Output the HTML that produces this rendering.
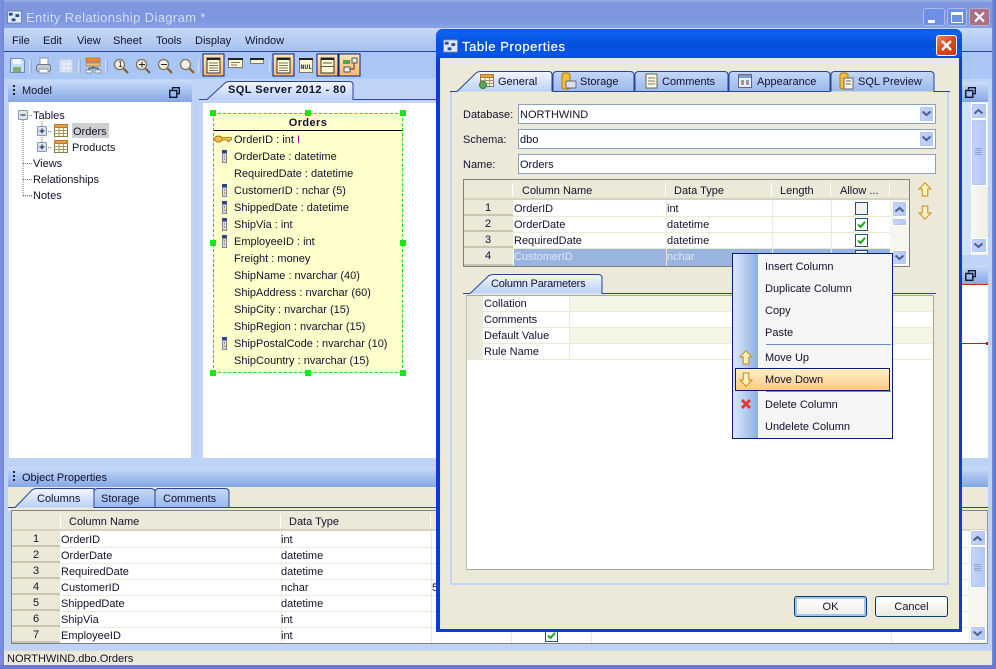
<!DOCTYPE html>
<html><head><meta charset="utf-8">
<style>
html,body{margin:0;padding:0;width:996px;height:669px;overflow:hidden;background:#fff}
#w{position:absolute;left:0;top:0;width:996px;height:669px;overflow:hidden;background:#bfd3f7;font:11px/14px "Liberation Sans",sans-serif;color:#12122e;letter-spacing:0}
.a,.t,svg.i{position:absolute}
.t{white-space:nowrap;margin-top:1px}
.b{position:absolute;box-sizing:border-box}
.hd{background:linear-gradient(#c9dbf9,#84a7e4)}
.rh{position:absolute;background:#ece9d8;box-shadow:inset 0 -2px 0 #c9c5b2}
.ln{position:absolute;background:#ece9d8}
.sb{position:absolute;box-sizing:border-box;background:linear-gradient(90deg,#c5d5fb,#b3c6f6);border:1px solid #fff;outline:1px solid #b4c8f0;outline-offset:-2px;border-radius:2px}
</style></head><body>
<div id="w">
<svg width="0" height="0" style="position:absolute"><defs>
<linearGradient id="ga" x1="0" y1="0" x2="0" y2="1"><stop offset="0" stop-color="#f3f7fe"/><stop offset="1" stop-color="#b9d0f6"/></linearGradient>
<linearGradient id="gi" x1="0" y1="0" x2="0" y2="1"><stop offset="0" stop-color="#c6d8f8"/><stop offset="1" stop-color="#9ab9ec"/></linearGradient>
<linearGradient id="go" x1="0" y1="0" x2="0" y2="1"><stop offset="0" stop-color="#ffe9b8"/><stop offset="1" stop-color="#fbb668"/></linearGradient>
<symbol id="tbl" viewBox="0 0 14 13"><rect x=".5" y=".5" width="13" height="12" fill="#fffbe8" stroke="#8a7a50"/><rect x=".5" y=".5" width="13" height="3" fill="#e8a040" stroke="#b07a30"/><path d="M5 3v9M9.500 3v9M1 6.500h12M1 9.500h12" stroke="#a09870"/></symbol>
<symbol id="idx" viewBox="0 0 7 13"><path d="M1 0h5v3H1z" fill="#2c4a80"/><rect x="1.500" y="3.500" width="4" height="9" fill="#dcdcd0" stroke="#80858f"/><path d="M3 6h1M3 9h1" stroke="#555"/></symbol>
<symbol id="up" viewBox="0 0 14 15"><path d="M7 .8 13 7H9.800v7H4.200V7H1z" fill="#fff2b8" stroke="#c88a20"/></symbol>
<symbol id="dn" viewBox="0 0 14 15"><path d="M7 14.200 13 8H9.800V1H4.200v7H1z" fill="#fff2b8" stroke="#c88a20"/></symbol>
<symbol id="chk" viewBox="0 0 13 13"><rect x=".5" y=".5" width="12" height="12" fill="#fff" stroke="#1c5180"/><path d="M3 6.500 5.500 9 10 3.800" fill="none" stroke="#21a121" stroke-width="2"/></symbol>
<symbol id="unc" viewBox="0 0 13 13"><rect x=".5" y=".5" width="12" height="12" fill="#f2f2ee" stroke="#1c5180"/></symbol>
<symbol id="rest" viewBox="0 0 11 11"><path d="M3.500 2.500V.7h6.800v6H8M.8 3.500h7v6.800h-7z" fill="none" stroke="#0c1830" stroke-width="1.400"/></symbol>
<symbol id="cu" viewBox="0 0 11 7"><path d="M1.500 5.500 5.500 2 9.500 5.500" fill="none" stroke="#4d6185" stroke-width="2"/></symbol>
<symbol id="cd" viewBox="0 0 11 7"><path d="M1.500 1.500 5.500 5 9.500 1.500" fill="none" stroke="#4d6185" stroke-width="2"/></symbol>
<symbol id="mag" viewBox="0 0 16 16"><circle cx="6.500" cy="6.500" r="5" fill="#f4f0dc" stroke="#7a7460" stroke-width="1.300"/><path d="M10.500 10.500 15 15" stroke="#8a5a30" stroke-width="2.200"/></symbol>
<symbol id="erd" viewBox="0 0 16 14"><rect x=".5" y=".5" width="15" height="13" fill="#dfe8f8" stroke="#7080a0"/><rect x="2" y="2.500" width="4" height="3" fill="#234a9a"/><rect x="9" y="4" width="4" height="3" fill="#234a9a"/><rect x="5" y="8.500" width="4" height="3" fill="#234a9a"/></symbol>
</defs></svg>

<!-- main frame -->
<div class="b" style="left:0;top:0;width:996px;height:28px;background:linear-gradient(#9cb0ea 0,#7f98df 10%,#7c96df 70%,#8aa3e6);border-radius:7px 7px 0 0"></div>
<div class="b" style="left:0;top:0;width:4px;height:669px;background:linear-gradient(90deg,#7d8fe0,#7189dc)"></div>
<div class="b" style="left:992px;top:0;width:4px;height:669px;background:linear-gradient(90deg,#7189dc,#5f72cc)"></div>
<div class="b" style="left:0;top:665px;width:996px;height:4px;background:#6d79d0"></div>
<svg class="i" style="left:7px;top:10px" width="15" height="14"><use href="#erd"/></svg>
<div class="t" style="left:26px;top:8px;font-size:13px;line-height:17px;color:#d3def9;letter-spacing:.37px">Entity Relationship Diagram *</div>
<div class="b" style="left:923px;top:8px;width:22px;height:18px;border:1px solid #aabcf0;border-radius:3px;background:#6d8fe6"></div><div class="a" style="left:928px;top:20px;width:7px;height:3px;background:#fff"></div>
<div class="b" style="left:947px;top:8px;width:20px;height:18px;border:1px solid #aabcf0;border-radius:3px;background:#6d8fe6"></div><div class="b" style="left:951px;top:12px;width:12px;height:11px;border:1px solid #fff;border-top-width:3px"></div>
<div class="b" style="left:969px;top:8px;width:21px;height:18px;border:1px solid #b8aed0;border-radius:3px;background:#ab7088"></div><svg class="i" style="left:973px;top:11px" width="13" height="12"><path d="M2 1.500 11 10.500M11 1.500 2 10.500" stroke="#fff" stroke-width="2.200"/></svg>

<!-- menu -->
<div class="b" style="left:4px;top:28px;width:988px;height:24px;background:linear-gradient(#c8d9f7,#a6c1ee);border-bottom:1px solid #27439c"></div>
<div class="t" style="left:12px;top:33px">File</div><div class="t" style="left:43px;top:33px">Edit</div><div class="t" style="left:77px;top:33px">View</div><div class="t" style="left:113px;top:33px">Sheet</div><div class="t" style="left:156px;top:33px">Tools</div><div class="t" style="left:195px;top:33px">Display</div><div class="t" style="left:245px;top:33px">Window</div>
<!-- toolbar -->
<div class="b" style="left:4px;top:52px;width:988px;height:27px;background:#aac6f5"></div>
<svg class="i" style="left:0;top:52px" width="370" height="26">
<path d="M10.500 6.500h12l2 2v12h-14z" fill="#c9dcf6" stroke="#6d8cb4"/><rect x="13" y="7" width="8" height="5" fill="#f2f6fc"/><rect x="13" y="15" width="8" height="5" fill="#7fb07a"/>
<path d="M30 7v14M79 7v14M106 7v14M199 7v14M270 7v14" stroke="#f0f5ff"/><path d="M31 7v14M80 7v14M107 7v14M200 7v14M271 7v14" stroke="#7f9cd8"/>
<rect x="40" y="6" width="8" height="7" fill="#fff" stroke="#8a95a8"/><rect x="36.500" y="12.500" width="14" height="7" rx="2" fill="#c5ccd8" stroke="#6d7688"/><rect x="39" y="17" width="9" height="4" fill="#fff" stroke="#8a95a8"/>
<rect x="59.500" y="7.500" width="13" height="13" fill="#d0ddf5" stroke="#c8ccd8"/><path d="M64 8v12M68.500 8v12M60 12h12M60 16h12" stroke="#eef2fc"/>
<rect x="86" y="6" width="14" height="4" fill="#e88a30" stroke="#9a5a20" stroke-width=".5"/><rect x="86" y="11" width="14" height="3" fill="#e8c070" stroke="#8a6a20" stroke-width=".5"/><path d="M93 14v2M89 16h9M89 16v2M98 16v2" stroke="#444" fill="none"/><rect x="86" y="18" width="6" height="3" fill="#eee" stroke="#555" stroke-width=".5"/><rect x="95" y="18" width="6" height="3" fill="#eee" stroke="#555" stroke-width=".5"/>
<use href="#mag" x="113" y="6" width="16" height="16"/><text x="118" y="15" font-size="8" fill="#111" font-family="Liberation Sans">1</text>
<use href="#mag" x="135" y="6" width="16" height="16"/><path d="M139 12.500h6M142 9.500v6" stroke="#222"/>
<use href="#mag" x="157" y="6" width="16" height="16"/><path d="M161 12.500h6" stroke="#222"/>
<use href="#mag" x="179" y="6" width="16" height="16"/>
<rect x="203" y="2" width="21" height="22" fill="url(#go)" stroke="#0a1c7a"/><rect x="207" y="6" width="13" height="15" fill="#fffbd0" stroke="#333"/><rect x="207" y="6" width="13" height="2" fill="#222"/><path d="M209 11h9M209 13.500h9M209 16h9M209 18.500h9" stroke="#777"/>
<rect x="228.500" y="6.500" width="14" height="9" fill="#fffbd0" stroke="#777"/><rect x="228" y="6" width="15" height="2" fill="#222"/><path d="M231 10.500h9M231 13h6" stroke="#777"/>
<rect x="250.500" y="6.500" width="13" height="5" fill="#fffbd0" stroke="#777"/><rect x="250" y="6" width="14" height="2" fill="#222"/>
<rect x="273" y="2" width="21" height="22" fill="url(#go)" stroke="#0a1c7a"/><rect x="277" y="6" width="13" height="15" fill="#fffbd0" stroke="#333"/><rect x="277" y="6" width="13" height="2" fill="#222"/><path d="M279 11h9M279 13.500h9M279 16h9M279 18.500h9" stroke="#777"/>
<rect x="299.500" y="6.500" width="13" height="14" fill="#fffbd0" stroke="#777"/><rect x="299" y="6" width="14" height="2" fill="#222"/><text x="300.500" y="17" font-size="6.500" font-weight="bold" fill="#143a6a" font-family="Liberation Mono">NUL</text>
<rect x="317" y="2" width="21" height="22" fill="url(#go)" stroke="#0a1c7a"/><rect x="321" y="6" width="13" height="15" fill="#fffbd0" stroke="#333"/><rect x="321" y="6" width="13" height="2" fill="#222"/><path d="M323 11h9M321 14.500h13" stroke="#555"/>
<rect x="339" y="2" width="21" height="22" fill="url(#go)" stroke="#0a1c7a"/><rect x="343" y="8" width="7" height="4" fill="#54a04c"/><rect x="352" y="6" width="5" height="5" fill="#eee" stroke="#555"/><rect x="344" y="15" width="6" height="5" fill="#eee" stroke="#555"/><path d="M354 11v6H350" fill="none" stroke="#333"/>
</svg>

<!-- model panel -->
<div class="b hd" style="left:8px;top:80px;width:184px;height:22px"></div>
<div class="a" style="left:13px;top:85px;width:2px;height:2px;background:#223;box-shadow:0 4px #223,0 8px #223"></div>
<div class="t" style="left:22px;top:83px">Model</div>
<svg class="i" style="left:169px;top:87px" width="11" height="11"><use href="#rest"/></svg>
<div class="b" style="left:9px;top:102px;width:182px;height:356px;background:#fff"></div>
<svg class="i" style="left:9px;top:102px" width="182" height="110">
<path d="M14 18v76h10M14 61.500h9M14 77.500h10M14 93.500h10M14 13.500h10M33 19v26M33 29.500h10M33 45.500h10" fill="none" stroke="#777" stroke-dasharray="1 1"/>
<rect x="9.500" y="8.500" width="9" height="9" rx="1" fill="#dde6ee" stroke="#7f99b8"/><path d="M11.500 13h5" stroke="#111"/>
<rect x="28.500" y="24.500" width="9" height="9" rx="1" fill="#dde6ee" stroke="#7f99b8"/><path d="M30.500 29h5M33 26.500v5" stroke="#111"/>
<rect x="28.500" y="40.500" width="9" height="9" rx="1" fill="#dde6ee" stroke="#7f99b8"/><path d="M30.500 45h5M33 42.500v5" stroke="#111"/>
<use href="#tbl" x="45" y="22" width="14" height="13"/><use href="#tbl" x="45" y="38" width="14" height="13"/>
</svg>
<div class="a" style="left:72px;top:123px;width:37px;height:15px;background:#cfcfcf"></div>
<div class="t" style="left:33px;top:108px">Tables</div><div class="t" style="left:73px;top:124px">Orders</div><div class="t" style="left:72px;top:140px">Products</div><div class="t" style="left:33px;top:156px">Views</div><div class="t" style="left:33px;top:172px">Relationships</div><div class="t" style="left:33px;top:188px">Notes</div>

<!-- diagram -->
<div class="b" style="left:199px;top:98px;width:243px;height:362px;background:#c3d5f6"></div>
<div class="b" style="left:203px;top:103px;width:240px;height:355px;background:#fff"></div>
<svg class="i" style="left:199px;top:80px" width="243" height="23"><path d="M0 19.500H8L26 3Q28 1.500 31 1.500H150Q154 1.500 154 5V19.500H243" fill="url(#ga)" stroke="#2a4398"/></svg>
<div class="t" style="left:228px;top:82px;font-weight:bold;letter-spacing:.45px">SQL Server 2012 - 80</div>
<div class="b" style="left:213px;top:113px;width:190px;height:260px;background:#ffffcc;border:1px dashed #000;outline:1px dashed #28e028;outline-offset:-1px"></div>
<div class="a" style="left:214px;top:130px;width:188px;height:1px;background:#000"></div>
<div class="t" style="left:213px;width:190px;text-align:center;top:115px;font-weight:bold;letter-spacing:.4px">Orders</div>
<svg class="i" style="left:210px;top:110px" width="196" height="266" fill="#19e619"><rect width="6" height="6"/><rect x="95" width="6" height="6"/><rect x="190" width="6" height="6"/><rect y="130" width="6" height="6"/><rect x="190" y="130" width="6" height="6"/><rect y="260" width="6" height="6"/><rect x="95" y="260" width="6" height="6"/><rect x="190" y="260" width="6" height="6"/>
<ellipse cx="8.500" cy="29" rx="4" ry="3" fill="#f4c440" stroke="#9a7a10"/><path d="M12 27.500h9.500v2.500h-2v1.500h-2V30H12z" fill="#f4c440" stroke="#9a7a10" stroke-width=".7"/>
<use href="#idx" x="11" y="40" width="7" height="13"/><use href="#idx" x="11" y="74" width="7" height="13"/><use href="#idx" x="11" y="91" width="7" height="13"/><use href="#idx" x="11" y="108" width="7" height="13"/><use href="#idx" x="11" y="125" width="7" height="13"/><use href="#idx" x="11" y="227" width="7" height="13"/></svg>
<div class="t" style="left:234px;top:132px">OrderID : int <span style="color:#a000a0">I</span></div>
<div class="t" style="left:234px;top:149px">OrderDate : datetime</div>
<div class="t" style="left:234px;top:166px">RequiredDate : datetime</div>
<div class="t" style="left:234px;top:183px">CustomerID : nchar (5)</div>
<div class="t" style="left:234px;top:200px">ShippedDate : datetime</div>
<div class="t" style="left:234px;top:217px">ShipVia : int</div>
<div class="t" style="left:234px;top:234px">EmployeeID : int</div>
<div class="t" style="left:234px;top:251px">Freight : money</div>
<div class="t" style="left:234px;top:268px">ShipName : nvarchar (40)</div>
<div class="t" style="left:234px;top:285px">ShipAddress : nvarchar (60)</div>
<div class="t" style="left:234px;top:302px">ShipCity : nvarchar (15)</div>
<div class="t" style="left:234px;top:319px">ShipRegion : nvarchar (15)</div>
<div class="t" style="left:234px;top:336px">ShipPostalCode : nvarchar (10)</div>
<div class="t" style="left:234px;top:353px">ShipCountry : nvarchar (15)</div>

<!-- right panels -->
<div class="b hd" style="left:960px;top:82px;width:28px;height:20px"></div>
<svg class="i" style="left:965px;top:87px" width="11" height="11"><use href="#rest"/></svg>
<div class="b" style="left:962px;top:102px;width:26px;height:153px;background:#d5e1fb"></div>
<div class="b" style="left:971px;top:102px;width:17px;height:153px;background:linear-gradient(90deg,#f9f9f2,#eef0e8)"></div>
<div class="sb" style="left:971px;top:103px;width:16px;height:16px"></div><svg class="i" style="left:973px;top:108px" width="11" height="7"><use href="#cu"/></svg>
<div class="sb" style="left:971px;top:119px;width:16px;height:67px"></div>
<div class="a" style="left:975px;top:148px;width:7px;height:7px;background:repeating-linear-gradient(#8aa2d8 0 1px,transparent 1px 2px)"></div>
<div class="sb" style="left:971px;top:238px;width:16px;height:15px"></div><svg class="i" style="left:973px;top:242px" width="11" height="7"><use href="#cd"/></svg>
<div class="b hd" style="left:960px;top:265px;width:28px;height:19px"></div>
<svg class="i" style="left:965px;top:270px" width="11" height="11"><use href="#rest"/></svg>
<div class="b" style="left:962px;top:284px;width:26px;height:174px;background:#fff;border-top:1px solid #e02020"></div>
<div class="a" style="left:962px;top:343px;width:26px;height:1px;background:#f00"></div><div class="a" style="left:986px;top:342px;width:2px;height:3px;background:#d01010"></div>

<!-- bottom panel -->
<div class="b hd" style="left:8px;top:467px;width:980px;height:20px"></div>
<div class="a" style="left:13px;top:471px;width:2px;height:2px;background:#223;box-shadow:0 4px #223,0 8px #223"></div>
<div class="t" style="left:22px;top:470px">Object Properties</div>
<div class="b" style="left:8px;top:487px;width:980px;height:24px;background:#ece9d8"></div>
<svg class="i" style="left:8px;top:487px" width="980" height="22"><path d="M0 20.500H7L24 3Q26 1.500 29 1.500H86V20.500" fill="url(#ga)" stroke="#2a4398"/><path d="M86 20.500V5Q86 1.500 90 1.500H142Q147 1.500 147 5V20.500z" fill="url(#gi)" stroke="#2a4398"/><path d="M147 20.500V5Q147 1.500 151 1.500H217Q221 1.500 221 5V20.500z" fill="url(#gi)" stroke="#2a4398"/><path d="M221 20.500H980" stroke="#2a4398"/></svg>
<div class="t" style="left:37px;top:491px">Columns</div><div class="t" style="left:101px;top:491px">Storage</div><div class="t" style="left:163px;top:491px">Comments</div>
<div class="b" style="left:11px;top:510px;width:977px;height:134px;background:#fff;border:1px solid #7f8080;border-right-color:#999"></div>
<div class="a" style="left:12px;top:511px;width:975px;height:20px;background:#ece9d8;box-shadow:inset 0 -2px 0 #d6d2bf"></div>
<div class="a" style="left:60px;top:514px;width:1px;height:14px;background:#fff"></div><div class="a" style="left:280px;top:514px;width:1px;height:14px;background:#fff"></div><div class="a" style="left:430px;top:514px;width:1px;height:14px;background:#fff"></div>
<div class="t" style="left:69px;top:514px">Column Name</div><div class="t" style="left:289px;top:514px">Data Type</div>
<div class="rh" style="left:12px;top:531px;width:48px;height:16px"></div><div class="rh" style="left:12px;top:547px;width:48px;height:16px"></div><div class="rh" style="left:12px;top:563px;width:48px;height:16px"></div><div class="rh" style="left:12px;top:579px;width:48px;height:16px"></div><div class="rh" style="left:12px;top:595px;width:48px;height:16px"></div><div class="rh" style="left:12px;top:611px;width:48px;height:16px"></div><div class="rh" style="left:12px;top:627px;width:48px;height:16px"></div>
<div class="ln" style="left:60px;top:547px;width:908px;height:1px"></div><div class="ln" style="left:60px;top:563px;width:908px;height:1px"></div><div class="ln" style="left:60px;top:579px;width:908px;height:1px"></div><div class="ln" style="left:60px;top:595px;width:908px;height:1px"></div><div class="ln" style="left:60px;top:611px;width:908px;height:1px"></div><div class="ln" style="left:60px;top:627px;width:908px;height:1px"></div>
<div class="ln" style="left:281px;top:531px;width:1px;height:112px"></div><div class="ln" style="left:431px;top:531px;width:1px;height:112px"></div><div class="ln" style="left:511px;top:531px;width:1px;height:112px"></div><div class="ln" style="left:591px;top:531px;width:1px;height:112px"></div><div class="ln" style="left:891px;top:531px;width:1px;height:112px"></div>
<div class="t" style="left:33px;top:531px">1</div><div class="t" style="left:33px;top:547px">2</div><div class="t" style="left:33px;top:563px">3</div><div class="t" style="left:33px;top:579px">4</div><div class="t" style="left:33px;top:595px">5</div><div class="t" style="left:33px;top:611px">6</div><div class="t" style="left:33px;top:627px">7</div>
<div class="t" style="left:61px;top:532px">OrderID</div><div class="t" style="left:281px;top:532px">int</div>
<div class="t" style="left:61px;top:548px">OrderDate</div><div class="t" style="left:281px;top:548px">datetime</div>
<div class="t" style="left:61px;top:564px">RequiredDate</div><div class="t" style="left:281px;top:564px">datetime</div>
<div class="t" style="left:61px;top:580px">CustomerID</div><div class="t" style="left:281px;top:580px">nchar</div><div class="t" style="left:432px;top:580px">5</div>
<div class="t" style="left:61px;top:596px">ShippedDate</div><div class="t" style="left:281px;top:596px">datetime</div>
<div class="t" style="left:61px;top:612px">ShipVia</div><div class="t" style="left:281px;top:612px">int</div>
<div class="t" style="left:61px;top:628px">EmployeeID</div><div class="t" style="left:281px;top:628px">int</div>
<svg class="i" style="left:545px;top:629px" width="13" height="13"><use href="#chk"/></svg>
<div class="a" style="left:968px;top:531px;width:19px;height:112px;background:#f6f6ee"></div>
<div class="sb" style="left:970px;top:530px;width:16px;height:16px"></div><svg class="i" style="left:972px;top:535px" width="11" height="7"><use href="#cu"/></svg>
<div class="sb" style="left:970px;top:546px;width:16px;height:42px"></div>
<div class="a" style="left:974px;top:564px;width:7px;height:7px;background:repeating-linear-gradient(#8aa2d8 0 1px,transparent 1px 2px)"></div>
<div class="sb" style="left:970px;top:626px;width:16px;height:15px"></div><svg class="i" style="left:972px;top:630px" width="11" height="7"><use href="#cd"/></svg>
<!-- status -->
<div class="b" style="left:4px;top:650px;width:988px;height:15px;background:#ece9d8;border-top:1px solid #cfd6e6"></div>
<div class="t" style="left:7px;top:651px">NORTHWIND.dbo.Orders</div>

<!-- dialog -->
<div class="b" style="left:436px;top:29px;width:526px;height:603px;background:#0b3bd8;border-radius:7px 7px 0 0"></div>
<div class="b" style="left:436px;top:29px;width:526px;height:30px;background:linear-gradient(#0a5ae6 0,#0c62f0 12%,#0550dc 50%,#0454e8 85%,#0447cf);border-radius:7px 7px 0 0"></div>
<div class="b" style="left:440px;top:58px;width:519px;height:571px;background:#ece9d8"></div>
<svg class="i" style="left:443px;top:39px" width="15" height="14"><use href="#erd"/></svg>
<div class="t" style="left:462px;top:37px;font-size:13px;line-height:17px;color:#fff;letter-spacing:.6px;font-weight:normal;-webkit-text-stroke:.2px #fff">Table Properties</div>
<div class="b" style="left:936px;top:35px;width:21px;height:21px;border:1px solid #fff;border-radius:3px;background:linear-gradient(135deg,#e88868,#d8481c 50%,#c03a14)"></div>
<svg class="i" style="left:940px;top:39px" width="13" height="13"><path d="M2 2 11 11M11 2 2 11" stroke="#fff" stroke-width="2.400"/></svg>

<!-- dialog tabs -->
<svg class="i" style="left:448px;top:69px" width="504" height="24">
<path d="M2 22.500H9L27 5Q29 2.500 33 2.500H101Q104 2.500 104 6V22.500" fill="url(#ga)" stroke="#2a4398"/>
<path d="M105 22.500V6Q105 2.500 109 2.500H182Q186 2.500 186 6V22.500z" fill="url(#gi)" stroke="#2a4398"/>
<path d="M187 22.500V6Q187 2.500 191 2.500H276Q280 2.500 280 6V22.500z" fill="url(#gi)" stroke="#2a4398"/>
<path d="M281 22.500V6Q281 2.500 285 2.500H378Q382 2.500 382 6V22.500z" fill="url(#gi)" stroke="#2a4398"/>
<path d="M383 22.500V6Q383 2.500 387 2.500H482Q486 2.500 486 6V22.500H502" fill="url(#gi)" stroke="#2a4398"/>
<use href="#tbl" x="32" y="5" width="14" height="13"/><circle cx="35" cy="16" r="3.500" fill="#5aa55a" stroke="#3a7a3a"/>
<rect x="114" y="4" width="8" height="16" rx="2" fill="#f2c038" stroke="#a87a10"/><rect x="118" y="12" width="10" height="7" rx="1" fill="#dde" stroke="#667"/>
<path d="M198 5h11v14h-11zM198 8h-1M209 16h1" fill="#fff8e0" stroke="#6a6a58"/><path d="M200 9h7M200 12h7M200 15h7" stroke="#777"/>
<rect x="290.500" y="5.500" width="13" height="13" fill="#e8eef6" stroke="#667"/><rect x="291" y="6" width="12" height="3" fill="#7a9ad0"/><rect x="293" y="11" width="3" height="5" fill="#999"/><rect x="298" y="11" width="3" height="5" fill="#999"/>
<rect x="392" y="4" width="8" height="16" rx="2" fill="#f2c038" stroke="#a87a10"/><rect x="396" y="9" width="9" height="11" fill="#fff8e0" stroke="#666"/><path d="M398 12h5M398 15h5" stroke="#666"/>
</svg>
<div class="t" style="left:498px;top:74px">General</div><div class="t" style="left:580px;top:74px">Storage</div><div class="t" style="left:662px;top:74px">Comments</div><div class="t" style="left:757px;top:74px">Appearance</div><div class="t" style="left:858px;top:74px">SQL Preview</div>
<!-- panel -->
<div class="b" style="left:450px;top:92px;width:499px;height:493px;border:2px solid #c3d5f6;border-top:0;background:#ece9d8"></div>
<div class="t" style="left:463px;top:107px">Database:</div><div class="t" style="left:463px;top:132px">Schema:</div><div class="t" style="left:463px;top:157px">Name:</div>
<div class="b" style="left:518px;top:104px;width:418px;height:20px;background:#fff;border:1px solid #8ba2bd"></div>
<div class="b" style="left:518px;top:129px;width:418px;height:20px;background:#fff;border:1px solid #8ba2bd"></div>
<div class="b" style="left:518px;top:154px;width:418px;height:20px;background:#fff;border:1px solid #8ba2bd"></div>
<div class="t" style="left:520px;top:107px">NORTHWIND</div><div class="t" style="left:520px;top:132px">dbo</div><div class="t" style="left:520px;top:157px">Orders</div>
<div class="sb" style="left:919px;top:106px;width:15px;height:16px"></div><svg class="i" style="left:921px;top:110px" width="11" height="7"><use href="#cd"/></svg>
<div class="sb" style="left:919px;top:131px;width:15px;height:16px"></div><svg class="i" style="left:921px;top:135px" width="11" height="7"><use href="#cd"/></svg>

<!-- dialog grid -->
<div class="b" style="left:463px;top:179px;width:447px;height:88px;background:#fff;border:1px solid #7f8080"></div>
<div class="a" style="left:464px;top:180px;width:445px;height:20px;background:#ece9d8;box-shadow:inset 0 -2px 0 #d6d2bf"></div>
<div class="a" style="left:512px;top:183px;width:1px;height:14px;background:#fff"></div><div class="a" style="left:665px;top:183px;width:1px;height:14px;background:#fff"></div><div class="a" style="left:771px;top:183px;width:1px;height:14px;background:#fff"></div><div class="a" style="left:830px;top:183px;width:1px;height:14px;background:#fff"></div><div class="a" style="left:889px;top:183px;width:1px;height:14px;background:#fff"></div>
<div class="t" style="left:522px;top:183px">Column Name</div><div class="t" style="left:674px;top:183px">Data Type</div><div class="t" style="left:780px;top:183px">Length</div><div class="t" style="left:840px;top:183px">Allow ...</div>
<div class="rh" style="left:464px;top:200px;width:49px;height:16px"></div><div class="rh" style="left:464px;top:216px;width:49px;height:16px"></div><div class="rh" style="left:464px;top:232px;width:49px;height:16px"></div><div class="rh" style="left:464px;top:248px;width:49px;height:18px"></div>
<div class="a" style="left:514px;top:249px;width:376px;height:17px;background:#9ab4e0"></div>
<div class="ln" style="left:513px;top:216px;width:377px;height:1px"></div><div class="ln" style="left:513px;top:232px;width:377px;height:1px"></div><div class="ln" style="left:513px;top:248px;width:377px;height:1px"></div>
<div class="ln" style="left:666px;top:200px;width:1px;height:66px"></div><div class="ln" style="left:772px;top:200px;width:1px;height:66px"></div><div class="ln" style="left:831px;top:200px;width:1px;height:66px"></div>
<div class="t" style="left:485px;top:200px">1</div><div class="t" style="left:485px;top:216px">2</div><div class="t" style="left:485px;top:232px">3</div><div class="t" style="left:485px;top:248px">4</div>
<div class="t" style="left:514px;top:201px">OrderID</div><div class="t" style="left:667px;top:201px">int</div>
<div class="t" style="left:514px;top:217px">OrderDate</div><div class="t" style="left:667px;top:217px">datetime</div>
<div class="t" style="left:514px;top:233px">RequiredDate</div><div class="t" style="left:667px;top:233px">datetime</div>
<div class="t" style="left:514px;top:249px;color:#dfe8f7">CustomerID</div><div class="t" style="left:667px;top:249px;color:#dfe8f7">nchar</div>
<svg class="i" style="left:855px;top:202px" width="13" height="13"><use href="#unc"/></svg><svg class="i" style="left:855px;top:218px" width="13" height="13"><use href="#chk"/></svg><svg class="i" style="left:855px;top:234px" width="13" height="13"><use href="#chk"/></svg><svg class="i" style="left:855px;top:250px" width="13" height="13"><use href="#unc"/></svg>
<div class="a" style="left:890px;top:200px;width:19px;height:66px;background:#f6f6ee"></div>
<div class="sb" style="left:892px;top:201px;width:15px;height:16px"></div><svg class="i" style="left:894px;top:206px" width="11" height="7"><use href="#cu"/></svg>
<div class="sb" style="left:892px;top:218px;width:15px;height:8px"></div>
<div class="sb" style="left:892px;top:250px;width:15px;height:15px"></div><svg class="i" style="left:894px;top:254px" width="11" height="7"><use href="#cd"/></svg>
<svg class="i" style="left:918px;top:182px" width="14" height="15"><use href="#up"/></svg>
<svg class="i" style="left:918px;top:205px" width="14" height="15"><use href="#dn"/></svg>

<!-- column params -->
<svg class="i" style="left:463px;top:272px" width="473" height="23"><path d="M0 21.500H7L26 3.500Q28 2.500 31 2.500H135Q139 2.500 139 6V21.500H473" fill="url(#ga)" stroke="#2a4398"/></svg>
<div class="t" style="left:491px;top:276px;letter-spacing:-.2px">Column Parameters</div>
<div class="b" style="left:466px;top:295px;width:468px;height:275px;background:#fff;border:1px solid #aca899;border-left:1px solid #c4c1ae"></div>
<div class="a" style="left:467px;top:296px;width:16px;height:64px;background:#ece9d8"></div>
<div class="a" style="left:570px;top:296px;width:363px;height:16px;background:#f5f5e5"></div><div class="a" style="left:570px;top:328px;width:363px;height:16px;background:#f5f5e5"></div>
<div class="ln" style="left:483px;top:311px;width:450px;height:1px"></div><div class="ln" style="left:483px;top:327px;width:450px;height:1px"></div><div class="ln" style="left:483px;top:343px;width:450px;height:1px"></div><div class="ln" style="left:483px;top:359px;width:450px;height:1px"></div>
<div class="ln" style="left:569px;top:296px;width:1px;height:64px"></div>
<div class="t" style="left:484px;top:296px">Collation</div><div class="t" style="left:484px;top:312px">Comments</div><div class="t" style="left:484px;top:328px">Default Value</div><div class="t" style="left:484px;top:344px">Rule Name</div>
<!-- buttons -->
<div class="b" style="left:794px;top:596px;width:73px;height:21px;border:1px solid #003c74;border-radius:3px;background:linear-gradient(#fff,#f0efe6);box-shadow:inset 0 0 0 2px #a9c3ef;text-align:center;line-height:20px">OK</div>
<div class="b" style="left:875px;top:596px;width:73px;height:21px;border:1px solid #003c74;border-radius:3px;background:linear-gradient(#fff,#ecebe0);text-align:center;line-height:20px">Cancel</div>

<!-- context menu -->
<div class="b" style="left:732px;top:253px;width:161px;height:186px;background:#f5f5f5;border:1px solid #0a1c7a"></div>
<div class="a" style="left:733px;top:254px;width:25px;height:184px;background:linear-gradient(90deg,#dbe8fc,#8eafe0)"></div>
<div class="a" style="left:766px;top:344px;width:125px;height:1px;background:#6d88c4"></div><div class="a" style="left:766px;top:391px;width:125px;height:1px;background:#6d88c4"></div>
<div class="b" style="left:735px;top:368px;width:155px;height:23px;border:1px solid #0a1c7a;background:linear-gradient(#fff0c8,#fbc888)"></div>
<div class="t" style="left:765px;top:259px">Insert Column</div><div class="t" style="left:765px;top:281px">Duplicate Column</div><div class="t" style="left:765px;top:303px">Copy</div><div class="t" style="left:765px;top:325px">Paste</div><div class="t" style="left:765px;top:350px">Move Up</div><div class="t" style="left:765px;top:372px">Move Down</div><div class="t" style="left:765px;top:397px">Delete Column</div><div class="t" style="left:765px;top:419px">Undelete Column</div>
<svg class="i" style="left:739px;top:350px" width="14" height="15"><use href="#up"/></svg>
<svg class="i" style="left:739px;top:372px" width="14" height="15"><use href="#dn"/></svg>
<svg class="i" style="left:740px;top:398px" width="12" height="12"><path d="M2 2 10 10M10 2 2 10" stroke="#e03838" stroke-width="3"/></svg>
</div>
</body></html>
